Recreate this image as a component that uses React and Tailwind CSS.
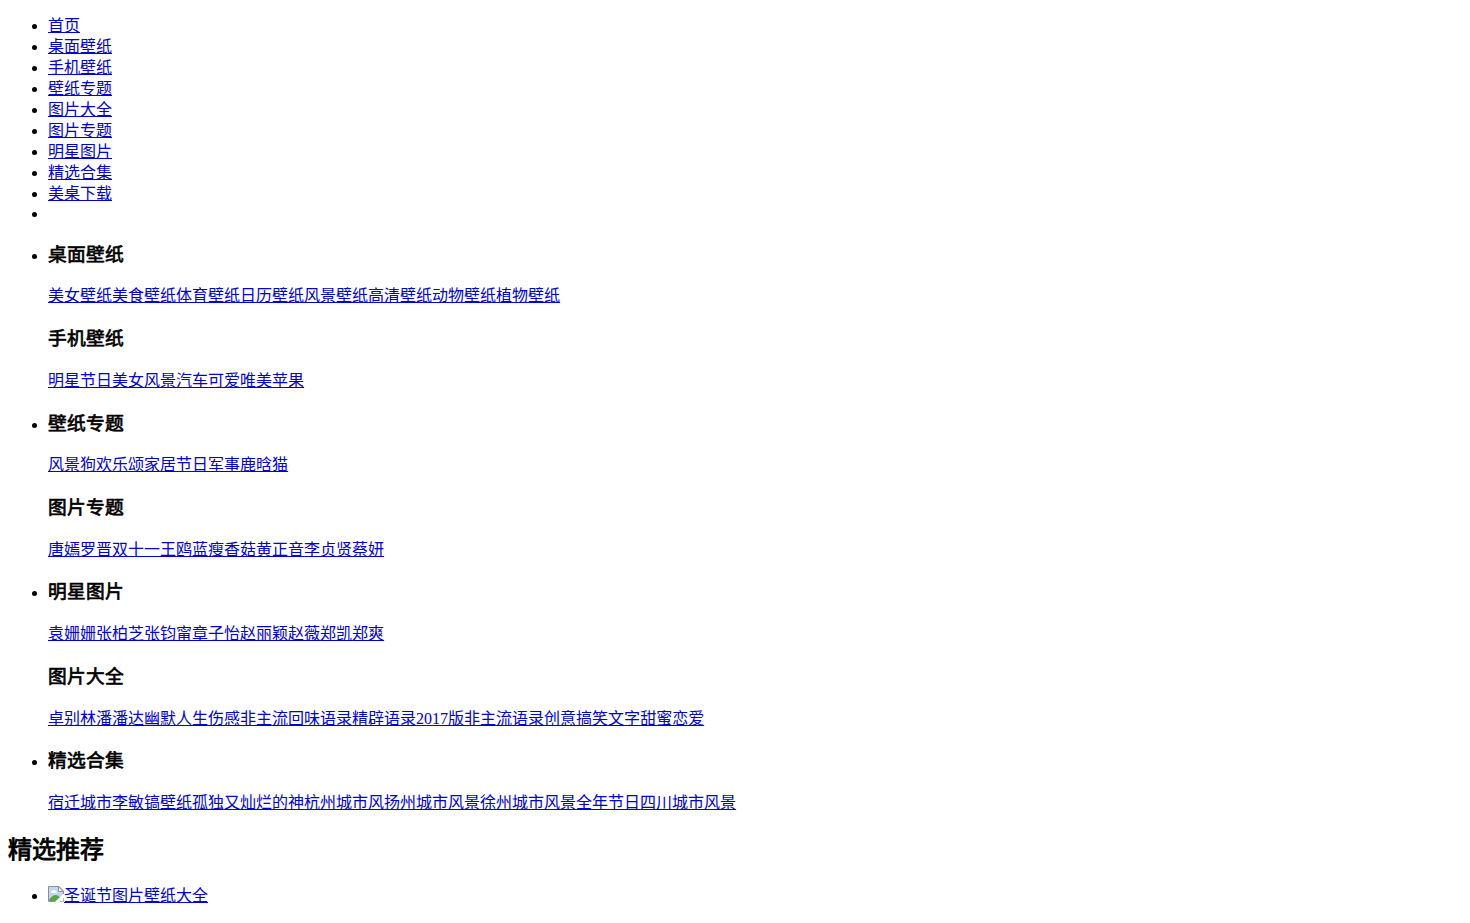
import React from "react";

const navItems = [
  "首页",
  "桌面壁纸",
  "手机壁纸",
  "壁纸专题",
  "图片大全",
  "图片专题",
  "明星图片",
  "精选合集",
  "美桌下载",
];

const menuGroups = [
  [
    {
      title: "桌面壁纸",
      links: ["美女壁纸", "美食壁纸", "体育壁纸", "日历壁纸", "风景壁纸", "高清壁纸", "动物壁纸", "植物壁纸"],
    },
    {
      title: "手机壁纸",
      links: ["明星", "节日", "美女", "风景", "汽车", "可爱", "唯美", "苹果"],
    },
  ],
  [
    {
      title: "壁纸专题",
      links: ["风景", "狗", "欢乐颂", "家居", "节日", "军事", "鹿晗", "猫"],
    },
    {
      title: "图片专题",
      links: ["唐嫣罗晋", "双十一", "王鸥", "蓝瘦香菇", "黄正音", "李贞贤", "蔡妍"],
    },
  ],
  [
    {
      title: "明星图片",
      links: ["袁姗姗", "张柏芝", "张钧甯", "章子怡", "赵丽颖", "赵薇", "郑凯", "郑爽"],
    },
    {
      title: "图片大全",
      links: ["卓别林", "潘潘达", "幽默人生", "伤感非主流", "回味语录", "精辟语录", "2017版非主流语录", "创意搞笑文字", "甜蜜恋爱"],
    },
  ],
  [
    {
      title: "精选合集",
      links: ["宿迁城市", "李敏镐壁纸", "孤独又灿烂的神", "杭州城市风", "扬州城市风景", "徐州城市风景", "全年节日", "四川城市风景"],
    },
  ],
];

function Link({ children }) {
  return (
    <a href="#" className="text-[#0000d8] underline">
      {children}
    </a>
  );
}

// placeholder thumbnail: torn page with a small landscape
function BrokenImage() {
  return (
    <svg width="16" height="16" viewBox="0 0 16 16" className="-mb-px inline-block align-baseline">
      <path d="M0.5 15.5V0.5H11L15.5 5V9L9 15.5Z" fill="#fff" />
      <path d="M1 1H10.5V5.5H15V8.5L8 15H1Z" fill="#c0d6f6" />
      <path d="M3 7a1.5 1.5 0 0 1 1.2-1.9a2 2 0 0 1 3.6 0.2a1.1 1.1 0 0 1 0.7 1.7Z" fill="#fff" />
      <path d="M1 15V13.5C3.5 10.5 5.5 9 7.5 9C9.3 9.1 10.6 9.8 11.8 11.2L7.5 15Z" fill="#56a845" />
      <path d="M7.5 15.5H0.5V0.5H11L15.5 5V8" fill="none" stroke="#8f8f8f" />
      <path d="M10.5 0.8V5.5H15.3Z" fill="#fff" stroke="#8f8f8f" />
      <path d="M15.5 12V15.5H12" fill="none" stroke="#b8b8b8" />
      <path d="M16 8.2L7.5 16H10L16 10.5Z" fill="#fff" />
    </svg>
  );
}

function MenuSection({ title, links }) {
  return (
    <>
      <h3 className="my-[18.72px] text-[18.72px] leading-[26px] font-normal tracking-[0.28px] [-webkit-text-stroke:0.7px_black]">
        {title}
      </h3>
      <div className="pb-px">
        {links.map((link) => (
          <Link key={link}>{link}</Link>
        ))}
      </div>
    </>
  );
}

export default function App() {
  return (
    <div
      lang="zh-CN"
      className="flow-root h-[923px] overflow-hidden bg-white px-2 font-['Liberation_Serif','Noto_Sans_CJK_SC',serif] text-base leading-5 text-black"
    >
      <ul className="mt-4 list-disc pl-10">
        {navItems.map((item) => (
          <li key={item} className="pb-px">
            <Link>{item}</Link>
          </li>
        ))}
        <li className="h-[18px] leading-[18px]"></li>
        {menuGroups.map((sections, i) => (
          <li key={i}>
            {sections.map((section) => (
              <MenuSection key={section.title} {...section} />
            ))}
          </li>
        ))}
      </ul>

      <h2 className="my-[19.92px] text-2xl leading-8 font-normal [-webkit-text-stroke:0.9px_black]">精选推荐</h2>

      <ul className="list-disc pl-10">
        <li>
          <a href="#" className="text-[#0000d8] underline">
            <BrokenImage />
            圣诞节图片壁纸大全
          </a>
        </li>
      </ul>
    </div>
  );
}
